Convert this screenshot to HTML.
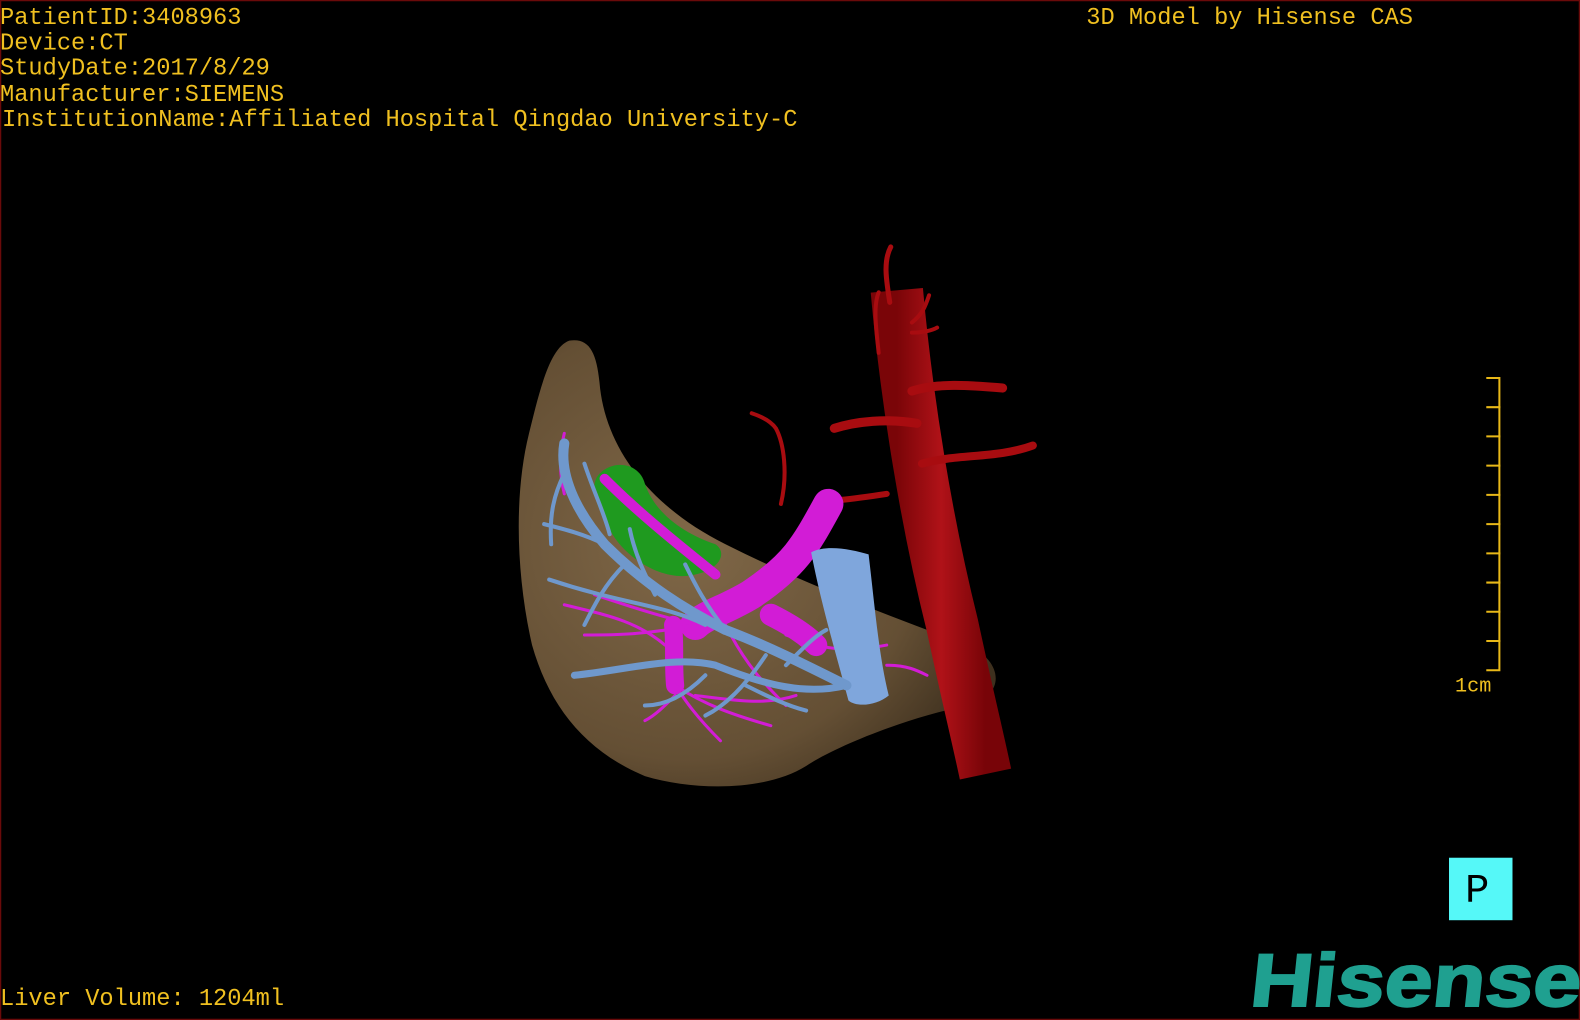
<!DOCTYPE html>
<html><head><meta charset="utf-8"><style>
html,body{margin:0;padding:0;background:#000;width:1580px;height:1020px;overflow:hidden}
svg{display:block}
.t{font-family:"Liberation Mono",monospace;font-size:23.5px;fill:#f0c020}
</style></head><body>
<svg width="1580" height="1020" viewBox="0 0 1568 1012" preserveAspectRatio="none">
<defs>
<radialGradient id="lv" cx="0.35" cy="0.45" r="0.7">
<stop offset="0" stop-color="#806848"/><stop offset="0.7" stop-color="#644f34"/><stop offset="1" stop-color="#3e301e"/>
</radialGradient>
<linearGradient id="ao" x1="0" x2="1"><stop offset="0" stop-color="#7a0508"/><stop offset="0.5" stop-color="#b01218"/><stop offset="1" stop-color="#780408"/></linearGradient>
</defs>
<rect x="0.5" y="0.5" width="1567" height="1011" fill="#000" stroke="#6a0a0a" stroke-width="1.5"/>
<text class="t" x="0" y="24">PatientID:3408963</text>
<text class="t" x="0" y="49">Device:CT</text>
<text class="t" x="0" y="74">StudyDate:2017/8/29</text>
<text class="t" x="0" y="100">Manufacturer:SIEMENS</text>
<text class="t" x="2" y="125">InstitutionName:Affiliated Hospital Qingdao University-C</text>
<text class="t" x="1078" y="24">3D Model by Hisense CAS</text>
<text class="t" x="0" y="997">Liver Volume: 1204ml</text>
<path d="M565,338 C585,335 592,350 595,380 C600,440 640,500 720,540 C800,580 880,610 960,640 C995,655 1000,690 960,700 C900,712 830,740 800,760 C760,785 690,785 640,770 C580,745 545,700 528,640 C512,570 510,490 525,430 C535,390 545,345 565,338 Z" fill="url(#lv)"/>
<path d="M595,470 C610,455 635,460 640,480 C650,510 680,530 710,540 C722,548 715,565 690,570 C660,578 620,555 605,525 C590,500 585,480 595,470 Z" fill="#1f9a1f"/>
<path d="M890,288 C900,400 920,520 945,620 C960,690 970,730 978,768" stroke="url(#ao)" stroke-width="52" stroke-linecap="butt" fill="none"/>
<g stroke="#a80c10" fill="none" stroke-linecap="round">
<path d="M905,388 C930,380 960,382 995,385" stroke-width="9"/>
<path d="M910,420 C880,415 850,418 828,425" stroke-width="9"/>
<path d="M915,460 C950,450 990,455 1025,442" stroke-width="8"/>
<path d="M880,490 C860,493 845,495 835,496" stroke-width="6"/>
<path d="M883,300 C880,280 876,260 884,245" stroke-width="5"/>
<path d="M872,350 C870,330 866,305 872,290" stroke-width="4"/>
<path d="M905,320 C915,312 918,305 922,293" stroke-width="4"/>
<path d="M905,330 C915,330 925,328 930,325" stroke-width="4"/>
<path d="M775,500 C782,470 778,440 770,425 C765,418 755,413 746,410" stroke-width="4"/>
</g>
<g stroke="#d21cd6" fill="none" stroke-linecap="round">
<path d="M822,500 C800,540 790,560 745,590 C720,605 700,610 690,620" stroke-width="30"/>
<path d="M765,610 C785,620 800,630 810,640" stroke-width="22"/>
<path d="M668,620 C670,640 668,660 670,680" stroke-width="18"/>
<path d="M600,475 C630,505 660,530 710,570" stroke-width="10"/>
<g stroke-width="3">
<path d="M690,620 C650,610 620,600 590,590"/><path d="M690,620 C640,630 610,630 580,630"/>
<path d="M670,680 C700,700 730,710 765,720"/><path d="M670,680 C680,695 690,710 715,735"/>
<path d="M670,690 C660,700 650,710 640,715"/><path d="M560,430 C555,450 555,470 560,490"/>
<path d="M720,620 C740,660 760,680 780,700"/><path d="M780,630 C810,640 830,650 880,640"/>
<path d="M560,600 C600,610 630,615 660,640"/><path d="M690,690 C730,695 760,700 790,690"/>
<path d="M880,660 C900,660 910,665 920,670"/>
</g></g>
<path d="M805,548 C820,540 845,545 862,550 C868,600 872,650 882,690 C870,700 850,702 842,695 C830,650 815,600 805,548 Z" fill="#7fa6dc"/>
<g stroke="#6f98cc" fill="none" stroke-linecap="round">
<path d="M840,680 C800,660 760,640 720,625 C680,605 640,580 600,540 C570,505 555,470 560,440" stroke-width="10"/>
<path d="M840,680 C800,690 760,680 710,660 C670,650 620,665 570,670" stroke-width="7"/>
<g stroke-width="4">
<path d="M700,620 C660,600 620,600 545,575"/><path d="M600,540 C580,530 560,525 540,520"/>
<path d="M720,625 C700,600 690,580 680,560"/><path d="M650,590 C640,570 630,550 625,525"/>
<path d="M760,650 C740,680 720,700 700,710"/><path d="M780,660 C800,640 810,630 820,625"/>
<path d="M620,560 C600,580 590,600 580,620"/><path d="M560,470 C550,490 545,510 547,540"/>
<path d="M580,460 C590,490 600,510 605,530"/><path d="M700,670 C680,690 660,700 640,700"/>
<path d="M740,680 C760,690 780,700 800,705"/>
</g></g>
<g stroke="#e8b818" stroke-width="2" fill="none">
<path d="M1488,375 V665 M1475,375 H1489 M1475,665 H1489"/>
<path d="M1475,404 H1489 M1475,433 H1489 M1475,462 H1489 M1475,491 H1489 M1475,520 H1489 M1475,549 H1489 M1475,578 H1489 M1475,607 H1489 M1475,636 H1489"/>
</g>
<text x="1444" y="686" style="font-family:'Liberation Mono',monospace;font-size:20px;fill:#f0c020">1cm</text>
<rect x="1438" y="851" width="63" height="62" fill="#55f8f8"/>
<text x="1454" y="895" style="font-family:'Liberation Mono',monospace;font-size:40px;fill:#000">P</text>
<text x="1240" y="998" textLength="328" lengthAdjust="spacingAndGlyphs" transform="skewX(-6) translate(104,0)" style="font-family:'Liberation Sans',sans-serif;font-weight:bold;font-size:74px;fill:#1fa090;stroke:#1fa090;stroke-width:2">Hisense</text>
</svg>
</body></html>
